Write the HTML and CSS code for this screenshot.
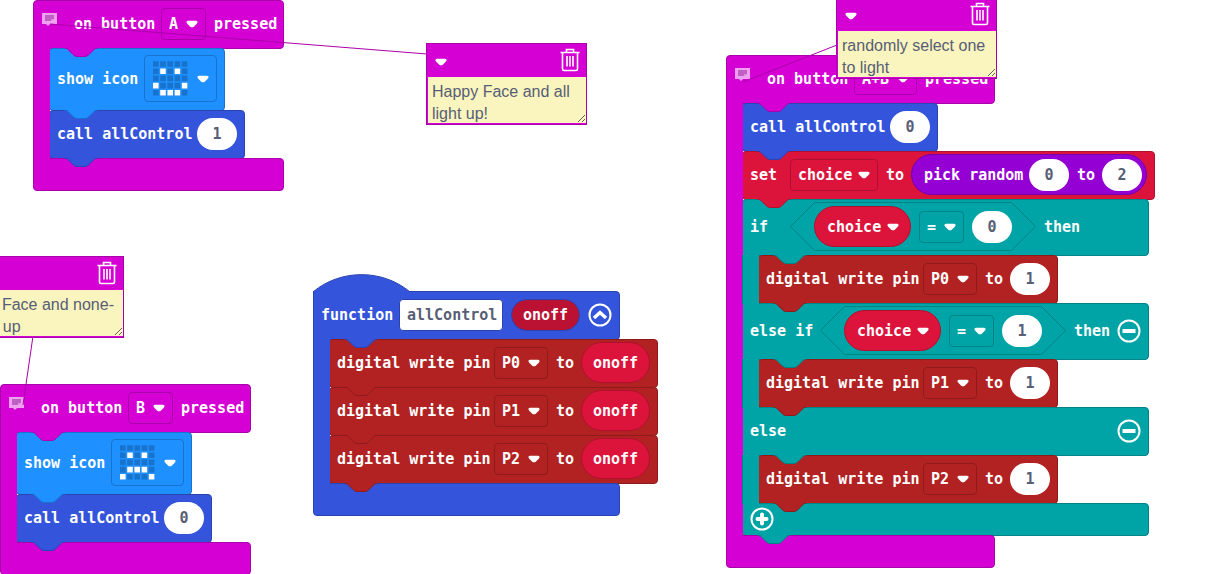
FILE: index.html
```html
<!DOCTYPE html>
<html lang="en">
<head>
<meta charset="utf-8">
<title>Block workspace</title>
<link rel="stylesheet" href="styles.css">
</head>
<body>
<svg class="defs" aria-hidden="true">
  <symbol id="notch" viewBox="0 0 34 9"><path class="notch-shape" d="M0 0 C2 0 3 .5 4 1.500 L9 6.500 Q11 8.500 13 8.500 H21 Q23 8.500 25 6.500 L30 1.500 C31 .5 32 0 34 0"/></symbol>
  <symbol id="arrow" viewBox="0 0 12 8"><path d="M2 .8 H10 Q12 1 11.500 2.800 Q11 3.600 7.800 6.700 Q6 8 4.200 6.700 Q1 3.600 .5 2.800 Q0 1 2 .8Z" fill="#fff"/></symbol>
  <symbol id="note" viewBox="0 0 15 13"><path d="M0 0H15V11H8L6 13L4 11H0Z" fill="#f0a0f0"/><path d="M3 2H12V6H9V8H3Z" fill="#c060c4"/><path d="M9 6H12L9 8Z" fill="#d98adb"/></symbol>
  <symbol id="trash" viewBox="0 0 20 24"><path d="M.5 4.500H19.500M6.500 4V1.500H13.500V4M2.500 5V21Q2.500 22.500 4 22.500H16Q17.500 22.500 17.500 21V5M7 8V18.500M10 8V18.500M13 8V18.500" fill="none" stroke="#fff" stroke-width="1.600"/></symbol>
  <symbol id="up" viewBox="0 0 24 24"><circle cx="12" cy="12" r="10.500" fill="none" stroke="#fff" stroke-width="2"/><path d="M6 15L12 9.500L18 15" fill="none" stroke="#fff" stroke-width="3.400"/></symbol>
  <symbol id="minus" viewBox="0 0 24 24"><circle cx="12" cy="12" r="10.500" fill="none" stroke="#fff" stroke-width="2"/><path d="M5.500 12H18.500" stroke="#fff" stroke-width="4"/></symbol>
  <symbol id="plus" viewBox="0 0 24 24"><circle cx="12" cy="12" r="10.500" fill="none" stroke="#fff" stroke-width="2"/><path d="M7.500 12H16.500M12 7.500V16.500" stroke="#fff" stroke-width="4" stroke-linecap="round"/></symbol>
  <symbol id="leds" viewBox="0 0 35 35"><path d="M0 3H35M0 10.200H35M0 17.400H35M0 24.600H35M0 31.800H35" stroke="#1873cc" stroke-width="5.600" stroke-dasharray="5.600 1.600"/></symbol>
</svg>
<main class="workspace">

  <section class="stack stack-a c-input">
    <div class="bar head">
      <svg class="note"><use href="#note"/></svg>
      <span class="w-onbutton">on button</span>
      <label class="field w-letter"><select aria-label="Button"><option>A</option></select><svg class="arrow"><use href="#arrow"/></svg></label>
      <span class="w-pressed">pressed</span>
      <svg class="notch inner"><use href="#notch"/></svg>
    </div>
    <div class="mouth">
      <div class="bar c-basic tall">
        <span class="w-showicon">show icon</span>
        <label class="field w-icon">
          <svg class="leds" viewBox="0 0 35 35"><use href="#leds"/><path d="M7.200 10.200h5.600M21.600 10.200h5.600M0 24.600h5.600M28.800 24.600h5.600M7.200 31.800h5.600M14.400 31.800h5.600M21.600 31.800h5.600" stroke="#fff" stroke-width="5.600"/></svg>
          <select aria-label="Icon"><option label=" ">happy</option></select><svg class="arrow"><use href="#arrow"/></svg></label>
        <svg class="notch"><use href="#notch"/></svg>
      </div>
      <div class="bar c-func">
        <span class="w-call">call allControl</span>
        <input class="num" aria-label="onoff" value="1">
        <svg class="notch"><use href="#notch"/></svg>
      </div>
    </div>
    <div class="bar foot"></div>
  </section>

  <section class="stack stack-b c-input">
    <div class="bar head">
      <svg class="note"><use href="#note"/></svg>
      <span class="w-onbutton">on button</span>
      <label class="field w-letter"><select aria-label="Button"><option>B</option></select><svg class="arrow"><use href="#arrow"/></svg></label>
      <span class="w-pressed">pressed</span>
      <svg class="notch inner"><use href="#notch"/></svg>
    </div>
    <div class="mouth">
      <div class="bar c-basic tall">
        <span class="w-showicon">show icon</span>
        <label class="field w-icon">
          <svg class="leds" viewBox="0 0 35 35"><use href="#leds"/><path d="M7.200 10.200h5.600M21.600 10.200h5.600M7.200 24.600h5.600M14.400 24.600h5.600M21.600 24.600h5.600M0 31.800h5.600M28.800 31.800h5.600" stroke="#fff" stroke-width="5.600"/></svg>
          <select aria-label="Icon"><option label=" ">sad</option></select><svg class="arrow"><use href="#arrow"/></svg></label>
        <svg class="notch"><use href="#notch"/></svg>
      </div>
      <div class="bar c-func">
        <span class="w-call">call allControl</span>
        <input class="num" aria-label="onoff" value="0">
        <svg class="notch"><use href="#notch"/></svg>
      </div>
    </div>
    <div class="bar foot"></div>
  </section>

  <section class="stack stack-fn c-func">
    <svg class="hat" viewBox="0 0 97 18"><path d="M.5 18V17.500C28 -5 69 -5 96.500 17.500V18" fill="#3455db" stroke="#2a43af"/></svg>
    <div class="bar head fn-head">
      <span class="w-function">function</span>
      <input class="fn-name" aria-label="Function name" value="allControl">
      <span class="pill param">onoff</span>
      <button class="round" aria-label="Collapse"><svg><use href="#up"/></svg></button>
      <svg class="notch inner"><use href="#notch"/></svg>
    </div>
    <div class="mouth">
      <div class="bar c-pins">
        <span class="w-pin">digital write pin</span>
        <label class="field w-port"><select aria-label="Pin"><option>P0</option></select><svg class="arrow"><use href="#arrow"/></svg></label>
        <span class="w-to">to</span><span class="pill var">onoff</span>
        <svg class="notch"><use href="#notch"/></svg>
      </div>
      <div class="bar c-pins">
        <span class="w-pin">digital write pin</span>
        <label class="field w-port"><select aria-label="Pin"><option>P1</option></select><svg class="arrow"><use href="#arrow"/></svg></label>
        <span class="w-to">to</span><span class="pill var">onoff</span>
        <svg class="notch"><use href="#notch"/></svg>
      </div>
      <div class="bar c-pins">
        <span class="w-pin">digital write pin</span>
        <label class="field w-port"><select aria-label="Pin"><option>P2</option></select><svg class="arrow"><use href="#arrow"/></svg></label>
        <span class="w-to">to</span><span class="pill var">onoff</span>
        <svg class="notch"><use href="#notch"/></svg>
      </div>
    </div>
    <div class="bar foot"></div>
  </section>

  <section class="stack stack-ab c-input">
    <div class="bar head">
      <svg class="note"><use href="#note"/></svg>
      <span class="w-onbutton">on button</span>
      <label class="field w-both"><select aria-label="Button"><option>A+B</option></select><svg class="arrow"><use href="#arrow"/></svg></label>
      <span class="w-pressed">pressed</span>
      <svg class="notch inner"><use href="#notch"/></svg>
    </div>
    <div class="mouth">
      <div class="bar c-func">
        <span class="w-call">call allControl</span>
        <input class="num" aria-label="onoff" value="0">
        <svg class="notch"><use href="#notch"/></svg>
      </div>
      <div class="bar c-vars">
        <span class="w-short">set</span>
        <label class="field w-choice"><select aria-label="Variable"><option>choice</option></select><svg class="arrow"><use href="#arrow"/></svg></label>
        <span class="w-to">to</span>
        <div class="random">
          <span class="w-random">pick random</span>
          <input class="num" aria-label="Minimum" value="0">
          <span class="w-to">to</span>
          <input class="num" aria-label="Maximum" value="2">
        </div>
        <svg class="notch"><use href="#notch"/></svg>
      </div>
      <div class="stack nested c-logic">
        <div class="bar head cond">
          <span class="w-short">if</span>
          <div class="hex">
            <svg class="hex-line" viewBox="0 0 246 49"><path d="M.5 24.500L24.500 .5H221.500L245.500 24.500L221.500 48.500H24.500Z" fill="none" stroke="#008385"/></svg>
            <label class="field pill-field"><select aria-label="Variable"><option>choice</option></select><svg class="arrow"><use href="#arrow"/></svg></label>
            <label class="field w-letter"><select aria-label="Comparison"><option>=</option></select><svg class="arrow"><use href="#arrow"/></svg></label>
            <input class="num" aria-label="Value" value="0">
          </div>
          <span class="w-then">then</span>
          <svg class="notch inner"><use href="#notch"/></svg>
        </div>
        <div class="mouth">
          <div class="bar c-pins">
            <span class="w-pin">digital write pin</span>
            <label class="field w-port"><select aria-label="Pin"><option>P0</option></select><svg class="arrow"><use href="#arrow"/></svg></label>
            <span class="w-to">to</span><input class="num" aria-label="Level" value="1">
            <svg class="notch"><use href="#notch"/></svg>
          </div>
        </div>
        <div class="bar head middle cond">
          <span class="w-elseif">else if</span>
          <div class="hex">
            <svg class="hex-line" viewBox="0 0 246 49"><path d="M.5 24.500L24.500 .5H221.500L245.500 24.500L221.500 48.500H24.500Z" fill="none" stroke="#008385"/></svg>
            <label class="field pill-field"><select aria-label="Variable"><option>choice</option></select><svg class="arrow"><use href="#arrow"/></svg></label>
            <label class="field w-letter"><select aria-label="Comparison"><option>=</option></select><svg class="arrow"><use href="#arrow"/></svg></label>
            <input class="num" aria-label="Value" value="1">
          </div>
          <span class="w-then">then</span>
          <button class="round" aria-label="Remove else if"><svg><use href="#minus"/></svg></button>
          <svg class="notch inner"><use href="#notch"/></svg>
        </div>
        <div class="mouth">
          <div class="bar c-pins">
            <span class="w-pin">digital write pin</span>
            <label class="field w-port"><select aria-label="Pin"><option>P1</option></select><svg class="arrow"><use href="#arrow"/></svg></label>
            <span class="w-to">to</span><input class="num" aria-label="Level" value="1">
            <svg class="notch"><use href="#notch"/></svg>
          </div>
        </div>
        <div class="bar head middle">
          <span>else</span>
          <button class="round" aria-label="Remove else"><svg><use href="#minus"/></svg></button>
          <svg class="notch inner"><use href="#notch"/></svg>
        </div>
        <div class="mouth">
          <div class="bar c-pins">
            <span class="w-pin">digital write pin</span>
            <label class="field w-port"><select aria-label="Pin"><option>P2</option></select><svg class="arrow"><use href="#arrow"/></svg></label>
            <span class="w-to">to</span><input class="num" aria-label="Level" value="1">
            <svg class="notch"><use href="#notch"/></svg>
          </div>
        </div>
        <div class="bar foot">
          <button class="round add" aria-label="Add branch"><svg><use href="#plus"/></svg></button>
          <svg class="notch"><use href="#notch"/></svg>
        </div>
      </div>
    </div>
    <div class="bar foot"></div>
  </section>

  <svg class="links" aria-hidden="true"><path d="M50 24L427 54M23 405L33 336M743 82L837 45" fill="none" stroke="#aa00aa"/></svg>

  <article class="comment comment-a">
    <header><button aria-label="Collapse comment"><svg class="arrow"><use href="#arrow"/></svg></button><button aria-label="Delete comment"><svg class="trash"><use href="#trash"/></svg></button></header>
    <textarea aria-label="Comment">Happy Face and all light up!</textarea>
  </article>
  <article class="comment comment-b">
    <header><button aria-label="Collapse comment"><svg class="arrow"><use href="#arrow"/></svg></button><button aria-label="Delete comment"><svg class="trash"><use href="#trash"/></svg></button></header>
    <textarea aria-label="Comment">Sad Face and none-light up</textarea>
  </article>
  <article class="comment comment-ab">
    <header><button aria-label="Collapse comment"><svg class="arrow"><use href="#arrow"/></svg></button><button aria-label="Delete comment"><svg class="trash"><use href="#trash"/></svg></button></header>
    <textarea aria-label="Comment">randomly select one to light</textarea>
  </article>
</main>
</body>
</html>
```
FILE: styles.css
```css
* { box-sizing: border-box; }
body { margin: 0; background: #fff; }
.defs { position: absolute; width: 0; height: 0; }

.workspace {
  position: relative;
  height: 100vh;
  overflow: hidden;
  color: #fff;
  font: bold 15px/20px "DejaVu Sans Mono", "Liberation Mono", monospace;
}

/* Category colours */
.c-input { --fill: #d400d4; --edge: #aa00aa; }
.c-basic { --fill: #1e90ff; --edge: #1873cc; }
.c-func { --fill: #3455db; --edge: #2a43af; }
.c-pins { --fill: #b22222; --edge: #8e1b1b; }
.c-vars { --fill: #dc143c; --edge: #b01030; }
.c-logic { --fill: #00a4a6; --edge: #008385; }

/* Block stacks, placed freely on the canvas */
.stack { display: flex; flex-direction: column; width: max-content; }
.stack-a, .stack-b, .stack-fn, .stack-ab { position: absolute; }
.stack-a { left: 33px; top: 0; }
.stack-b { left: 0; top: 384px; }
.stack-fn { left: 313px; top: 274px; }
.stack-ab { left: 726px; top: 55px; }

.bar {
  position: relative;
  display: flex;
  align-items: center;
  gap: 8px;
  min-height: 49px;
  margin-bottom: -1px;
  padding: 0 7px 2px;
  border: 1px solid var(--edge);
  border-radius: 4px;
  background: var(--fill);
  white-space: nowrap;
}
.tall { min-height: 63px; }
.cond { min-height: 57px; }
.head { border-bottom-left-radius: 0; }
.middle { border-top-left-radius: 0; }
.foot { min-height: 33px; border-top-left-radius: 0; }

.mouth { position: relative; width: 0; padding-left: 16px; }
.mouth::before {
  content: "";
  position: absolute;
  z-index: 1;
  left: 0;
  top: 0;
  bottom: -1px;
  width: 16px;
  border-left: 1px solid var(--edge);
  background: var(--fill);
}
.mouth > .bar { width: max-content; }

.notch { position: absolute; z-index: 2; left: 14px; top: 100%; width: 34px; height: 9px; fill: var(--fill); stroke: var(--edge); }
.notch.inner { left: 30px; }

.hat { display: block; width: 97px; height: 18px; margin-bottom: -1px; position: relative; z-index: 1; }
.fn-head { border-top-left-radius: 0; }

/* Label widths */
.w-onbutton, .w-showicon { width: 79px; }
.w-pressed { width: 62px; }
.w-call { width: 132px; }
.w-function { width: 70px; }
.w-pin { width: 149px; }
.w-to { width: 17px; }
.w-short { width: 32px; }
.w-elseif { width: 62px; }
.w-then { width: 35px; }
.w-random { width: 97px; }

.note { width: 15px; height: 13px; margin: -8px 9px 0 1px; }

/* Fields */
.field {
  display: grid;
  align-items: center;
  height: 32px;
  border: 1px solid var(--edge);
  border-radius: 4px;
}
.field select, .field .arrow { grid-area: 1 / 1; }
.field select {
  appearance: none;
  width: 100%;
  height: 30px;
  padding: 0 20px 0 7px;
  border: 0;
  background: none;
  color: inherit;
  font: inherit;
}
.field .arrow { justify-self: end; margin-right: 7px; pointer-events: none; }
.arrow { width: 12px; height: 8px; }
.w-letter { width: 45px; }
.w-both { width: 63px; }
.w-port { width: 54px; }
.w-choice { width: 88px; }
.w-icon { width: 73px; height: 47px; }
.leds { grid-area: 1 / 1; width: 35px; height: 35px; margin-left: 8px; }

.num, .fn-name {
  height: 32px;
  margin: 0;
  padding: 0;
  border: 0;
  background: #fff;
  color: #575e75;
  font: inherit;
}
.num { width: 40px; border-radius: 16px; text-align: center; }
.fn-name { width: 104px; padding-left: 7px; border: 1px solid var(--edge); border-radius: 4px; }

.pill {
  display: flex;
  align-items: center;
  justify-content: center;
  width: 69px;
  height: 41px;
  border: 1px solid #b01030;
  border-radius: 21px;
  background: #dc143c;
}
.param { height: 32px; background: #bb1133; border-color: #2a43af; }
.pill-field { width: 97px; height: 41px; border-color: #b01030; border-radius: 21px; background: #dc143c; }
.pill-field select { padding-left: 12px; }
.pill-field .arrow { margin-right: 11px; }

.random {
  display: flex;
  align-items: center;
  gap: 8px;
  height: 41px;
  padding: 0 4px 0 12px;
  border: 1px solid #7600a9;
  border-radius: 21px;
  background: #9400d3;
}
.hex { position: relative; display: flex; align-items: center; gap: 8px; height: 49px; padding: 0 24px; }
.hex-line { position: absolute; inset: 0; width: 100%; height: 100%; pointer-events: none; }

.round { width: 24px; height: 24px; margin-left: auto; padding: 0; border: 0; background: none; }
.round svg { display: block; width: 24px; height: 24px; }
.fn-head .round { margin-left: 0; }
.add { margin-left: 0; z-index: 3; }

.links { position: absolute; inset: 0; z-index: 4; width: 100%; height: 100%; pointer-events: none; }

/* Comments */
.comment { position: absolute; z-index: 5; width: 161px; border: 1px solid #aa00aa; background: #d400d4; }
.comment-a { left: 426px; top: 43px; }
.comment-b { left: -37px; top: 256px; }
.comment-ab { left: 836px; top: -3px; }
.comment header { display: flex; align-items: center; justify-content: space-between; height: 33px; padding: 0 6px 2px 8px; }
.comment button { display: flex; padding: 0; border: 0; background: none; }
.comment .arrow { margin-top: 4px; }
.trash { width: 20px; height: 24px; }
.comment textarea {
  display: block;
  width: 158px;
  height: 46px;
  margin: 0 0 1px 1px;
  padding: 4px 0 0 4px;
  border: 0;
  overflow: hidden;
  resize: both;
  background: #faf4bf;
  color: #575e75;
  font: 16px/22px "Liberation Sans", Arial, sans-serif;
}
```
